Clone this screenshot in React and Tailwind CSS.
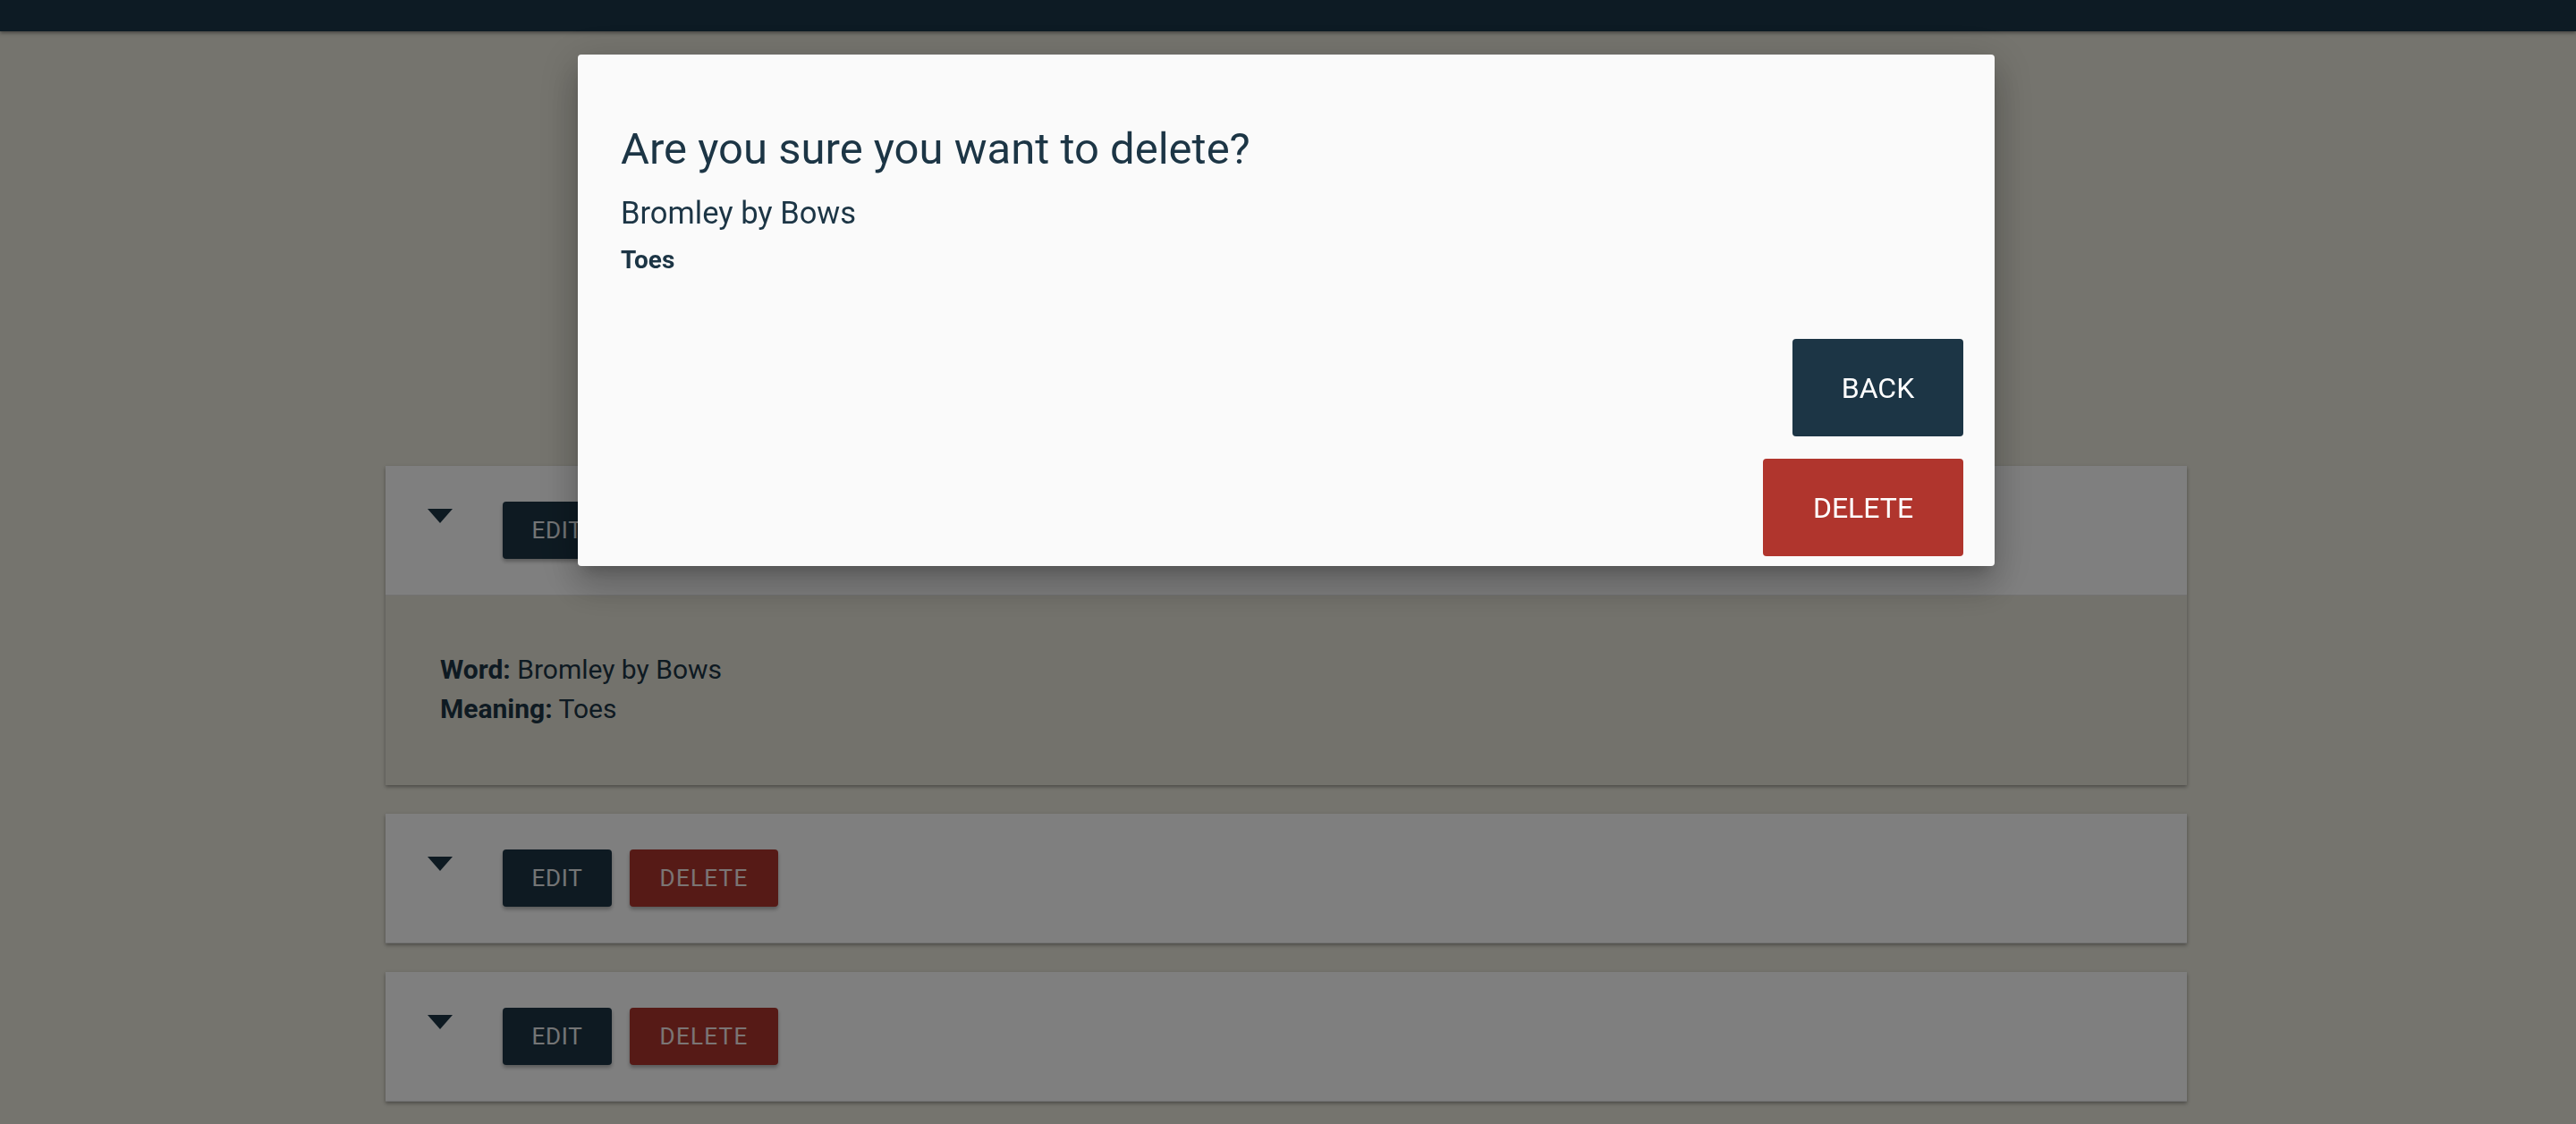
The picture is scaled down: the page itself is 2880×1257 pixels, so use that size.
import React from 'react';

const words = [
  { id: 1, word: 'Bromley by Bows', meaning: 'Toes', open: true },
  { id: 2, word: 'Apples and Pears', meaning: 'Stairs', open: false },
  { id: 3, word: 'Dog and Bone', meaning: 'Phone', open: false },
];

const DropArrow = () => (
  <svg width="28" height="16" viewBox="0 0 28 16" className="mt-[8px] shrink-0">
    <path d="M0 0 L28 0 L14 16 Z" fill="#1c3545" />
  </svg>
);

const WordCard = ({ item }) => (
  <div className="bg-[#e6e4d8] shadow-[0_2px_4px_rgba(0,0,0,0.35)]">
    <div className="bg-white flex items-start px-[47px] py-[40px] border-b border-black/10">
      <DropArrow />
      <button className="ml-[56px] h-[64px] w-[122px] rounded-[4px] bg-[#1c3545] text-[26px] tracking-[0.03em] text-white/90 shadow-[0_3px_4px_rgba(0,0,0,0.3)]">
        EDIT
      </button>
      <button className="ml-[20px] h-[64px] w-[166px] rounded-[4px] bg-[#ac342c] text-[26px] tracking-[0.05em] text-white/90 shadow-[0_3px_4px_rgba(0,0,0,0.3)]">
        DELETE
      </button>
    </div>
    {item.open && (
      <div className="px-[61px] pt-[61px] pb-[63px] text-[30px] leading-[44px] text-[#1c3545]">
        <div>
          <span className="font-bold">Word:</span> {item.word}
        </div>
        <div>
          <span className="font-bold">Meaning:</span> {item.meaning}
        </div>
      </div>
    )}
  </div>
);

const App = () => {
  return (
    <div className="relative min-h-screen bg-[#eae8dc] font-[Roboto,sans-serif] overflow-hidden">
      <div className="h-[35px] bg-[#1a3648] shadow-[0_2px_4px_rgba(0,0,0,0.4)]" />
      <div className="pr-[4px]">
        <div className="mx-auto mt-[486px] w-[2014px] flex flex-col gap-[32px] pb-[24px]">
          {words.map((item) => (
            <WordCard key={item.id} item={item} />
          ))}
        </div>
      </div>

      <div className="fixed inset-0 bg-black/50" />

      <div className="fixed left-[calc(50%-2px)] top-[61px] w-[1584px] -translate-x-1/2 rounded-[4px] bg-[#fafafa] pl-[48px] pr-[35px] pt-[77px] pb-[11px] text-[#1c3545] shadow-[0_11px_15px_-7px_rgba(0,0,0,0.2),0_24px_38px_3px_rgba(0,0,0,0.14),0_9px_46px_8px_rgba(0,0,0,0.12)]">
        <h2 className="text-[49px] leading-[58px]">Are you sure you want to delete?</h2>
        <p className="mt-[22px] text-[34.5px] leading-[40px]">Bromley by Bows</p>
        <p className="mt-[16px] text-[28px] leading-[34px] font-bold">Toes</p>
        <div className="mt-[71px] flex flex-col items-end gap-[25px]">
          <button className="h-[109px] w-[191px] rounded-[4px] bg-[#1c3545] text-[32px] text-white">
            BACK
          </button>
          <button className="h-[109px] w-[224px] rounded-[4px] bg-[#b0352d] text-[32px] text-white">
            DELETE
          </button>
        </div>
      </div>
    </div>
  );
};

export default App;
